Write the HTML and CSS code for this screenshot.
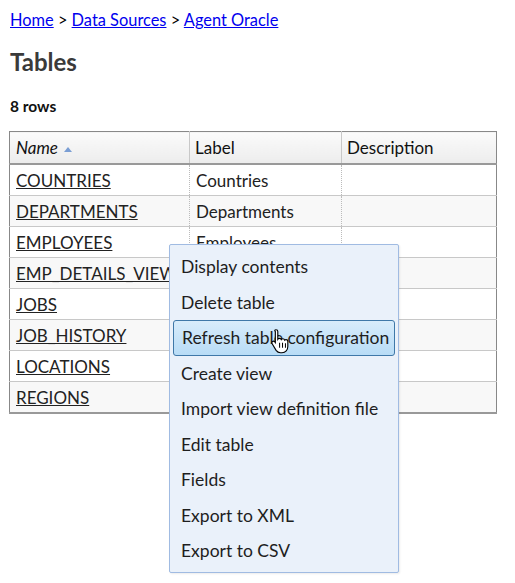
FILE: index.html
```html
<!DOCTYPE html>
<html>
<head>
<meta charset="utf-8">
<link rel="stylesheet" href="styles.css">
</head>
<body>
<div class="crumbs"><a href="#">Home</a> &gt; <a href="#">Data Sources</a> &gt; <a href="#">Agent Oracle</a></div>
<h1 class="title">Tables</h1>
<div class="count">8 rows</div>
<table class="grid">
  <thead>
    <tr><th class="c-name sorted">Name <span class="arrow"></span></th><th class="c-label">Label</th><th class="c-desc">Description</th></tr>
  </thead>
  <tbody>
    <tr><td><a href="#">COUNTRIES</a></td><td>Countries</td><td></td></tr>
    <tr><td><a href="#">DEPARTMENTS</a></td><td>Departments</td><td></td></tr>
    <tr><td><a href="#">EMPLOYEES</a></td><td>Employees</td><td></td></tr>
    <tr><td><a href="#">EMP_DETAILS_VIEW</a></td><td></td><td></td></tr>
    <tr><td><a href="#">JOBS</a></td><td></td><td></td></tr>
    <tr><td><a href="#">JOB_HISTORY</a></td><td></td><td></td></tr>
    <tr><td><a href="#">LOCATIONS</a></td><td></td><td></td></tr>
    <tr><td><a href="#">REGIONS</a></td><td></td><td></td></tr>
  </tbody>
</table>
<ul class="menu">
  <li>Display contents</li>
  <li>Delete table</li>
  <li class="hover">Refresh table configuration</li>
  <li>Create view</li>
  <li>Import view definition file</li>
  <li>Edit table</li>
  <li>Fields</li>
  <li>Export to XML</li>
  <li>Export to CSV</li>
</ul>
<svg class="cursor" width="21" height="27" viewBox="0 0 18 24">
  <path d="M5 1.5c1 0 1.6.7 1.6 1.6V10c.3-.5.9-.8 1.5-.8.8 0 1.4.5 1.6 1.1.3-.4.8-.7 1.4-.7.8 0 1.4.5 1.6 1.2.3-.3.7-.5 1.2-.5 1 0 1.6.8 1.6 1.7v4.4c0 3-2 5.6-5.2 5.6H9c-1.7 0-3-.8-3.9-2.1L1.6 14c-.5-.8-.3-1.7.4-2.1.7-.4 1.5-.2 2 .4l.4.6V3.1C3.4 2.2 4 1.5 5 1.5z" fill="#fff" stroke="#000" stroke-width="1"/>
  <path d="M8.2 13v4.5M10.8 13v4.5M13.4 13.5v4" stroke="#000" stroke-width="0.9"/>
</svg>
</body>
</html>
```
FILE: styles.css
```css
html, body {
  margin: 0;
  padding: 0;
  background: #fff;
}
body {
  padding: 10px 10px 0 10px;
  font-family: Lato, "Open Sans", sans-serif;
  color: #222;
  font-size: 16px;
  position: relative;
  min-height: 583px;
  box-sizing: border-box;
}
a {
  color: #222;
}
.crumbs {
  font-size: 16.4px;
  line-height: 20px;
  color: #000;
}
.crumbs a {
  color: #0000ee;
}
.title {
  margin: 17px 0 0 0;
  font-size: 24px;
  line-height: 30px;
  font-weight: bold;
  color: #3a3a3a;
}
.count {
  margin-top: 19px;
  font-size: 15.5px;
  line-height: 20px;
  font-weight: bold;
  color: #111;
}
.grid {
  margin-top: 15px;
  margin-left: -1px;
  border-collapse: collapse;
  width: 488px;
  border: 1px solid #888;
  border-bottom: 2px solid #999;
  font-size: 17px;
}
.grid th {
  height: 31px;
  padding: 0 5px;
  text-align: left;
  font-weight: normal;
  background: linear-gradient(#fbfbfb, #ececec);
  border-bottom: 2px solid #999;
  border-left: 1px solid #c8c8c8;
  color: #111;
}
.grid th:first-child {
  border-left: none;
  padding-left: 6px;
}
.grid th.sorted {
  font-style: italic;
}
.arrow {
  display: inline-block;
  width: 0;
  height: 0;
  border-left: 4px solid transparent;
  border-right: 4px solid transparent;
  border-bottom: 5px solid #7a9ed4;
  margin-left: 2px;
  vertical-align: 2px;
}
.c-name { width: 168px; }
.c-label { width: 141px; }
.grid td {
  height: 30px;
  padding: 0 6px;
  border-bottom: 1px solid #c8c8c8;
  border-left: 1px dotted #bbb;
  color: #222;
}
.grid td:first-child {
  border-left: none;
}
.grid tbody tr:nth-child(even) td {
  background: #f8f8f8;
}
.grid tbody tr:last-child td {
  border-bottom: none;
}
.menu {
  position: absolute;
  left: 169px;
  top: 244px;
  width: 224px;
  margin: 0;
  padding: 4px 2px 3px 2px;
  list-style: none;
  background: #eaf1fa;
  border: 1px solid #a0bbe2;
  border-radius: 2px;
  box-shadow: 1px 1px 2px rgba(0,0,0,0.08);
}
.menu li {
  height: 35.5px;
  line-height: 35.5px;
  padding-left: 9px;
  box-sizing: border-box;
  font-size: 17.5px;
  color: #1e1e1e;
  white-space: nowrap;
}
.menu li.hover {
  margin: 0 1px;
  padding-left: 8px;
  line-height: 33.5px;
  border: 1px solid #3f78a8;
  border-radius: 3px;
  background: linear-gradient(#d8ecfb, #b8dcf6);
}
.cursor {
  position: absolute;
  left: 270px;
  top: 328px;
}
```
